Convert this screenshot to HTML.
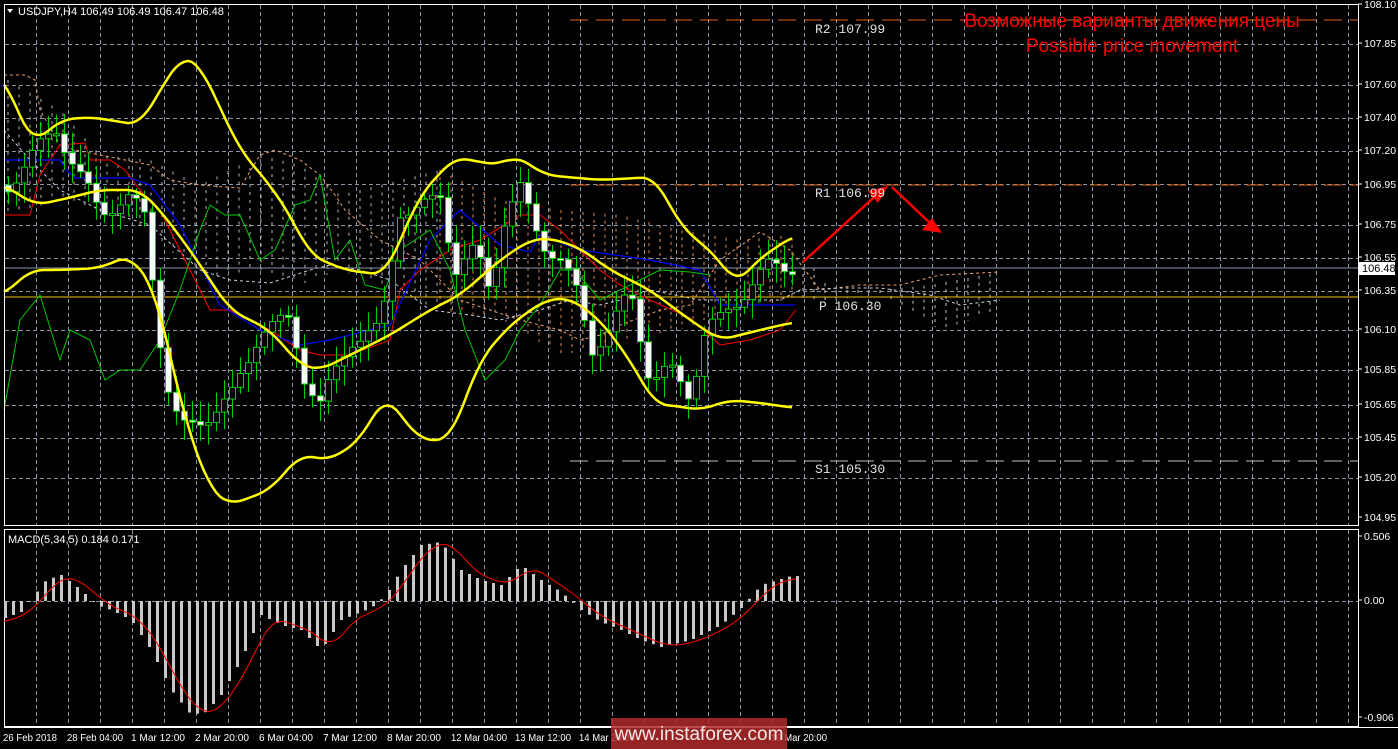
<!DOCTYPE html>
<html><head><meta charset="utf-8"><style>
html,body{margin:0;padding:0;background:#000;width:1398px;height:749px;overflow:hidden}
svg{display:block}
text{font-family:"Liberation Sans",sans-serif}
text.mono{font-family:"Liberation Mono",monospace}
</style></head><body>
<svg id="s" width="1398" height="749" xmlns="http://www.w3.org/2000/svg">
<rect width="1398" height="749" fill="#000"/>
<g id="grid" stroke="#8a96a8" stroke-width="1" stroke-dasharray="4,3"></g>
<g id="cloud" fill="none" stroke-width="1" stroke-dasharray="3,3"></g>
<line x1="570" y1="20" x2="1358" y2="20" stroke="#e0651e" stroke-dasharray="18,8"/>
<line x1="570" y1="185" x2="1358" y2="185" stroke="#e0651e" stroke-dasharray="18,8"/>
<line x1="570" y1="461" x2="1358" y2="461" stroke="#c0c0c0" stroke-dasharray="18,8"/>
<line x1="4" y1="297" x2="1358" y2="297" stroke="#f2c200"/>
<line x1="4" y1="268" x2="1358" y2="268" stroke="#8a96a8"/>
<g id="ind" fill="none"></g>
<g id="candles"></g>
<g id="bb" fill="none" stroke="#ffff00" stroke-width="2.5" stroke-linejoin="round"></g>
<g stroke="#ff0000" stroke-width="2.5" fill="#ff0000">
<line x1="803" y1="262" x2="882" y2="190"/>
<polygon points="888,186 868,191 878,203" stroke="none"/>
<line x1="892" y1="187" x2="932" y2="225"/>
<polygon points="942,233 922,230 932,218" stroke="none"/>
</g>
<g font-size="13" fill="#e0e0e0">
<text class="mono" x="815" y="33">R2 107.99</text>
<text class="mono" x="815" y="197">R1 106.99</text>
<text class="mono" x="819" y="310">P 106.30</text>
<text class="mono" x="815" y="473">S1 105.30</text>
</g>
<text x="1132" y="27" fill="#ff0000" font-size="19" text-anchor="middle">Возможные варианты движения цены</text>
<text x="1132" y="52" fill="#ff0000" font-size="19" text-anchor="middle">Possible price movement</text>
<rect x="4.5" y="4.5" width="1354" height="521" fill="none" stroke="#fff"/>
<rect x="4.5" y="529.5" width="1354" height="197" fill="none" stroke="#fff"/>
<line x1="4" y1="727.5" x2="1398" y2="727.5" stroke="#fff"/>
<polygon points="7,9 13,9 10,13" fill="#fff"/>
<text x="18" y="15" fill="#fff" font-size="11">USDJPY,H4  106.49 106.49 106.47 106.48</text>
<text x="8" y="543" fill="#fff" font-size="11">MACD(5,34,5) 0.184 0.171</text>
<g id="macd"></g>
<g id="axis" fill="#fff" font-size="10.5"></g>
<rect x="1359" y="262" width="36" height="13" fill="#fff"/>
<text x="1362" y="272" fill="#000" font-size="11">106.48</text>
<rect x="611" y="718" width="176" height="31" fill="#b22a2a" opacity="0.85"/>
<text x="699" y="740" fill="#fff" font-size="19" text-anchor="middle" opacity="0.9">www.instaforex.com</text>
</svg>
<script>
const NS="http://www.w3.org/2000/svg";
function el(p,t,a){const e=document.createElementNS(NS,t);for(const k in a)e.setAttribute(k,a[k]);p.appendChild(e);return e;}
function txt(p,x,y,s,a){const e=el(p,"text",Object.assign({x:x,y:y},a||{}));e.textContent=s;return e;}
const g=document.getElementById("grid");
for(let x=36;x<1358;x+=32){el(g,"line",{x1:x+.5,y1:5,x2:x+.5,y2:525});el(g,"line",{x1:x+.5,y1:530,x2:x+.5,y2:727});}
const ys=[44,85,118,151,184,225,258,291,330,370,405,438,478];
ys.forEach(y=>el(g,"line",{x1:5,y1:y+.5,x2:1358,y2:y+.5}));
el(g,"line",{x1:5,y1:601.5,x2:1358,y2:601.5});
const ax=document.getElementById("axis");
[["108.10",8],["107.85",47],["107.60",88],["107.40",121],["107.20",154],["106.95",188],["106.75",228],["106.55",261],["106.35",294],["106.10",333],["105.85",373],["105.65",408],["105.45",441],["105.20",481],["104.95",521],["0.506",540],["0.00",604],["-0.906",721]].forEach(([t,y])=>{txt(ax,1364,y,t);el(ax,"line",{x1:1358,y1:y-4,x2:1362,y2:y-4,stroke:"#fff"});});
["26 Feb 2018","28 Feb 04:00","1 Mar 12:00","2 Mar 20:00","6 Mar 04:00","7 Mar 12:00","8 Mar 20:00","12 Mar 04:00","13 Mar 12:00","14 Mar 20:00","","","19 Mar 20:00"].forEach((t,i)=>{txt(ax,3+i*64,741,t,{textLength:t.length>11?56:(t.length>10?54:50),lengthAdjust:"spacingAndGlyphs"});});
function interp(pts,x){for(let i=1;i<pts.length;i++){if(x<=pts[i][0]){const[a,b]=pts[i-1],[c,d]=pts[i];return b+(d-b)*(x-a)/(c-a);}}return pts[pts.length-1][1];}
function poly(p,pts,a){el(p,"polyline",Object.assign({points:pts.map(q=>q.join(",")).join(" ")},a));}
function smooth(pts){const o=[];for(let x=pts[0][0];x<=pts[pts.length-1][0];x+=4){let s=0,n=0;for(let d=-12;d<=12;d+=4){const xx=Math.min(Math.max(x+d,pts[0][0]),pts[pts.length-1][0]);s+=interp(pts,xx);n++;}o.push([x,s/n]);}return o;}
const bb=document.getElementById("bb");
poly(bb,smooth([[4,75],[20,120],[35,143],[60,120],[90,117],[140,125],[165,82],[183,55],[200,65],[240,150],[270,185],[290,215],[310,255],[345,270],[385,275],[420,195],[455,157],[480,162],[500,165],[515,155],[545,175],[600,180],[655,177],[680,225],[720,260],[735,285],[760,258],[795,235]]),{});
poly(bb,smooth([[4,185],[35,205],[60,200],[100,190],[140,190],[160,210],[190,250],[230,310],[270,330],[300,365],[320,370],[350,355],[390,335],[430,310],[460,295],[500,260],[530,240],[550,238],[580,248],[610,270],[650,290],[690,320],[720,340],[760,330],[795,322]]),{});
poly(bb,smooth([[4,295],[30,270],[60,270],[100,268],[130,255],[155,290],[185,420],[210,490],[230,505],[270,490],[300,455],[330,460],[360,440],[385,395],[420,440],[450,440],[480,360],[510,325],[545,300],[570,298],[600,320],[630,360],[655,405],[670,405],[700,410],[730,400],[760,403],[795,408]]),{});
const ind=document.getElementById("ind");
poly(ind,[[4,215],[30,215],[40,175],[60,145],[85,143],[90,160],[110,160],[125,170],[140,190],[160,210],[210,310],[230,310],[270,330],[300,350],[320,355],[350,355],[390,340],[400,290],[420,270],[450,250],[480,240],[520,215],[540,215],[560,230],[580,250],[600,270],[620,285],[650,300],[690,318],[720,345],[750,340],[780,330],[796,310]],{stroke:"#ff0000","stroke-width":1});
poly(ind,[[4,160],[60,160],[66,170],[75,178],[130,178],[150,185],[180,225],[220,305],[260,330],[300,345],[330,340],[390,325],[430,240],[460,210],[500,245],[530,252],[540,235],[580,250],[650,260],[700,270],[720,305],[760,305],[795,305]],{stroke:"#0000ff","stroke-width":1.2});
poly(ind,[[4,410],[20,320],[40,295],[60,360],[70,330],[90,340],[105,380],[120,370],[140,370],[160,340],[180,290],[190,260],[200,230],[210,205],[225,215],[240,215],[260,260],[275,250],[295,205],[310,200],[320,175],[335,260],[350,240],[365,285],[385,290],[400,250],[430,230],[450,270],[465,330],[485,380],[505,360],[520,330],[540,305],[560,270],[575,270],[600,300],[640,280],[660,270],[690,272],[710,275]],{stroke:"#00c800","stroke-width":1});
const cl=document.getElementById("cloud");
poly(cl,[[4,75],[25,75],[35,80],[40,110],[60,145],[75,150],[100,155],[150,165],[170,180],[200,185],[240,188],[260,155],[275,150],[300,160],[320,175],[335,195],[345,210],[380,240],[420,260],[460,300],[520,320],[560,330],[580,340],[600,335],[620,325],[660,310],[690,305],[720,260],[760,232],[790,250],[820,290],[860,285],[900,285],[920,280],[940,275],[1000,272]],{stroke:"#f0a070"});
poly(cl,[[4,130],[30,160],[60,190],[100,210],[150,225],[200,270],[230,280],[270,283],[310,270],[330,265],[360,270],[390,280],[430,310],[470,315],[500,320],[540,310],[570,300],[600,305],[620,300],[650,290],[700,300],[740,300],[780,300],[800,290],[840,288],[880,288],[930,295],[960,305],[1000,300]],{stroke:"#d0d0e0"});
for(let x=440;x<1000;x+=11){const t=interp([[440,170],[500,200],[560,210],[620,215],[680,230],[740,240],[790,235],[830,290],[880,290],[930,285],[1000,272]],x);const b=interp([[440,310],[500,318],[560,355],[620,345],[680,330],[740,305],[790,300],[830,300],[880,295],[940,330],[1000,310]],x);el(cl,"line",{x1:x,y1:t,x2:x,y2:b,stroke:x<800?"#e09060":"#c8c0c0","stroke-dasharray":"3,4"});}
for(let x=8;x<440;x+=11){const t=interp([[8,80],[60,110],[100,155],[150,160],[200,185],[260,155],[300,165],[340,195],[440,170]],x);const b=interp([[8,215],[60,200],[100,210],[150,230],[200,280],[260,270],[300,285],[340,270],[440,310]],x);el(cl,"line",{x1:x,y1:t,x2:x,y2:b,stroke:"#b8b8b8","stroke-dasharray":"3,5"});}
const cd=document.getElementById("candles");
const path=[[8,185],[30,160],[55,125],[75,170],[100,210],[130,200],[145,215],[155,300],[165,380],[180,430],[200,420],[230,400],[260,330],[290,320],[305,380],[320,405],[350,340],[380,330],[400,210],[420,210],[440,195],[455,270],[475,250],[490,290],[505,215],[520,190],[540,240],[560,260],[580,300],[590,350],[610,330],[630,290],[650,380],[670,370],[690,395],[705,330],[720,320],[750,285],[770,265],[795,267]];
let prev=interp(path,8);
for(let x=8;x<=796;x+=8){
 const c=interp(path,x)+Math.sin(x*1.7)*8;const o=prev;prev=c;
 const hi=Math.min(o,c)-6-Math.abs(Math.sin(x*0.37))*14, lo=Math.max(o,c)+6+Math.abs(Math.cos(x*0.53))*14;
 el(cd,"line",{x1:x+.5,y1:hi,x2:x+.5,y2:lo,stroke:"#00d000"});
 const top=Math.min(o,c),h=Math.max(2,Math.abs(o-c));
 el(cd,"rect",{x:x-2.5,y:top,width:6,height:h,fill:c>o?"#fff":"#000",stroke:"#00d000"});
}
const m=document.getElementById("macd");
const hp=[[4,618],[20,612],[45,580],[60,575],[80,590],[95,605],[110,610],[130,620],[150,650],[170,690],[190,715],[205,712],[220,695],[240,660],[260,615],[280,625],[300,630],[320,650],[340,620],[370,608],[385,595],[400,570],[420,545],[440,542],[460,570],[480,580],[500,585],[520,565],[540,580],[560,592],[580,610],[600,622],[620,630],[640,640],[660,647],[690,640],[720,625],[740,608],[760,585],[790,576]];
const sig=[];
for(let x=4;x<=796;x+=8){const y=interp(hp,x);el(m,"rect",{x:x,y:Math.min(y,601),width:3,height:Math.max(1,Math.abs(y-601)),fill:"#c8c8c8"});sig.push([x,interp(hp,x-12)]);}
poly(m,smooth(sig),{stroke:"#ff0000",fill:"none","stroke-width":1});
</script>
</body></html>
